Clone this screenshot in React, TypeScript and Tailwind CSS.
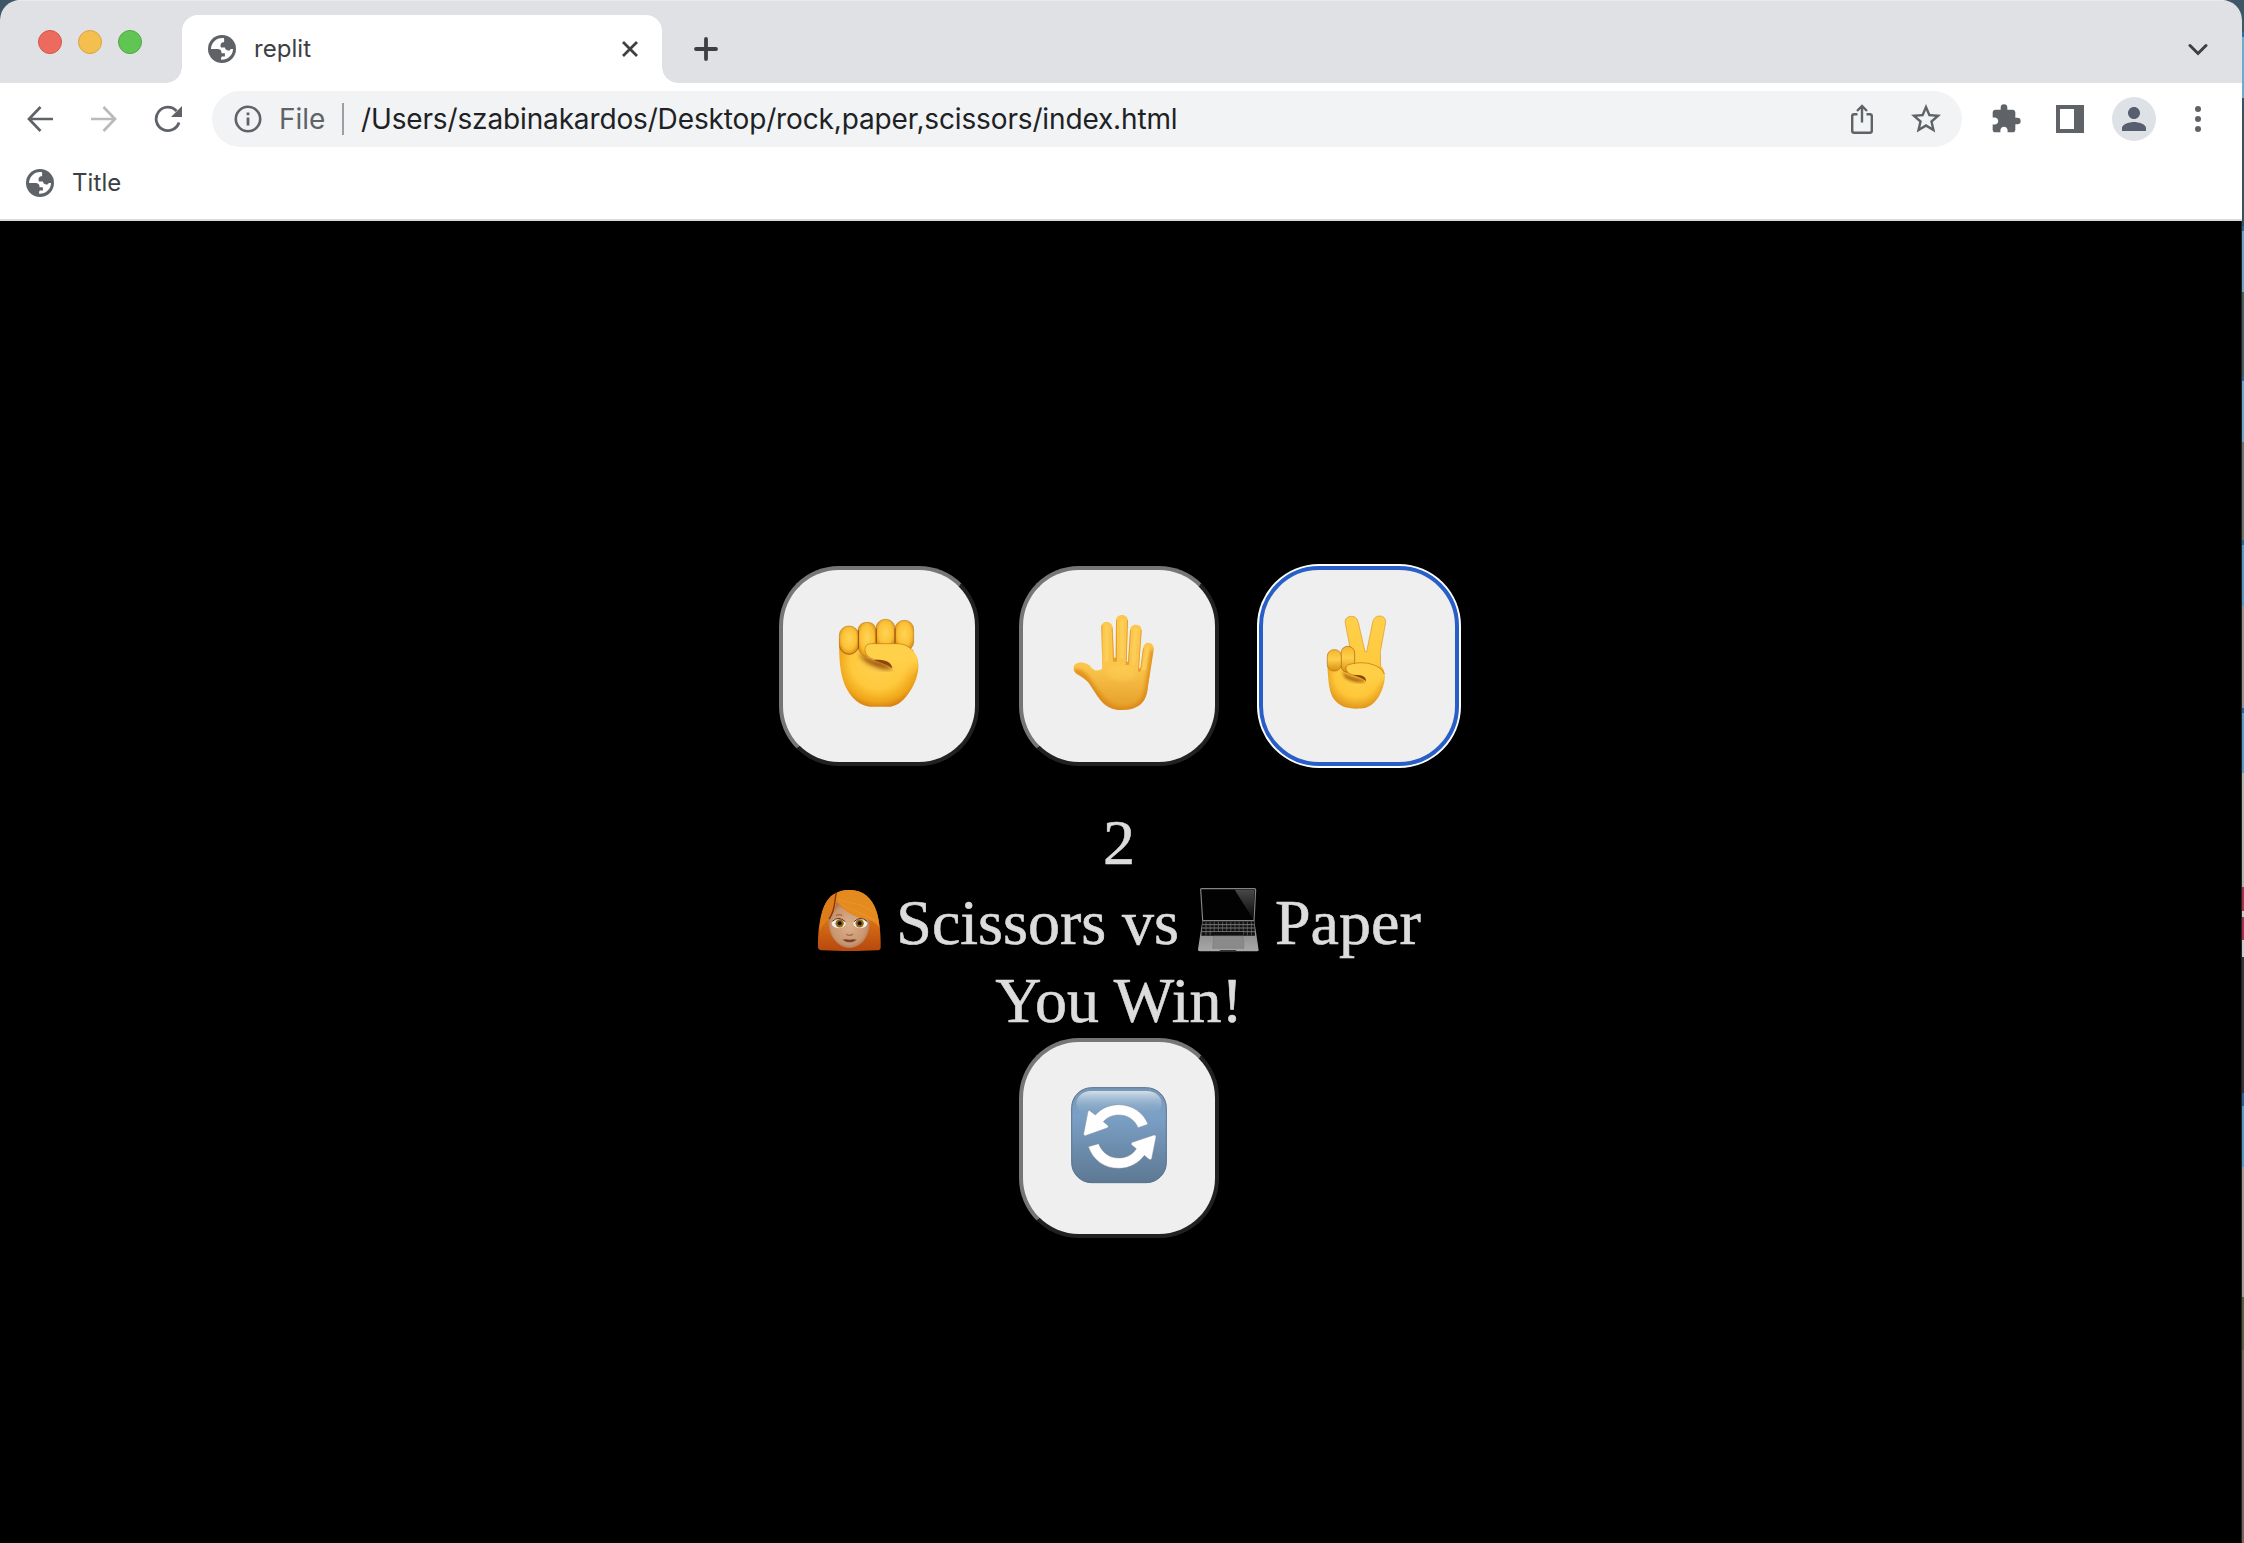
import React from "react";
import { MdExtension, MdPerson, MdStarBorder } from "react-icons/md";

function Globe() {
  return (
    <svg className="size-7 shrink-0" viewBox="0 0 28 28">
      <circle cx="14" cy="14" r="14" fill="#5f6368" />
      <path
        fill="#fff"
        d="M15.6 3.1C9 2.300 3.200 7.300 3 14h6.300c3 0 4.300 1.500 4.300 4.200h3.300v3.300h-2.300c-1 0-1.500.7-1.500 1.700v1.600C19.800 25 25 20 25 14h-2.300c-.5 1.300-1.500 1.700-2.800 1.500-1.900-.2-2.700-1.200-2.900-2.900h-3.900c-.8-.8-.9-3.300.4-4.500.9-.8 1.800-.8 2.600-.8V5.300c0-.9.300-1.600-.5-2.200z"
      />
    </svg>
  );
}

function ArrowIcon({ forward = false }: { forward?: boolean }) {
  return (
    <svg className="size-7" viewBox="0 0 28 28" fill="none" stroke={forward ? "#bababc" : "#5f6368"} strokeWidth="2.700">
      {forward ? <path d="M1 14h24M13.500 2 25 14 13.500 26" /> : <path d="M27 14H3M14.500 2 3 14l11.500 12" />}
    </svg>
  );
}

function ReloadIcon() {
  return (
    <svg className="size-7" viewBox="0 0 28 28">
      <path d="M25 17.500A11.700 11.700 0 1 1 22.500 6" fill="none" stroke="#5f6368" strokeWidth="2.800" />
      <path d="M28 1v11H17z" fill="#5f6368" />
    </svg>
  );
}

function InfoIcon() {
  return (
    <svg className="size-7" viewBox="0 0 28 28">
      <circle cx="14" cy="14" r="12.200" fill="none" stroke="#5f6368" strokeWidth="2.600" />
      <path d="M12.600 7.500h2.800v2.800h-2.800zM12.600 12.500h2.800v8h-2.800z" fill="#5f6368" />
    </svg>
  );
}

function ShareIcon() {
  return (
    <svg className="h-[30px] w-6" viewBox="0 0 24 30" fill="none" stroke="#5f6368" strokeWidth="2.400">
      <path d="M7.500 10.200H4.200a2 2 0 0 0-2 2v14.600a2 2 0 0 0 2 2h15.600a2 2 0 0 0 2-2V12.200a2 2 0 0 0-2-2h-3.300M12 18.500V2.500M7 7l5-5 5 5" />
    </svg>
  );
}

function FistEmoji() {
  return (
    <svg className="-m-1 size-[200px]" viewBox="27 33 600 600" role="img" aria-label="Raised fist">
      <defs>
        <radialGradient id="fistBody" gradientUnits="userSpaceOnUse" cx="325" cy="320" r="150">
          <stop offset="0" stopColor="#ffd052" />
          <stop offset="0.550" stopColor="#fec93c" />
          <stop offset="0.800" stopColor="#f0a51a" />
          <stop offset="1" stopColor="#c56c0f" />
        </radialGradient>
        <radialGradient id="fistFinger" cx="0.500" cy="0.450" r="0.620">
          <stop offset="0" stopColor="#ffd455" />
          <stop offset="0.600" stopColor="#fbc136" />
          <stop offset="1" stopColor="#d2830c" />
        </radialGradient>
        <linearGradient id="fistThumb" gradientUnits="userSpaceOnUse" x1="0" y1="266" x2="0" y2="365">
          <stop offset="0" stopColor="#ffd04a" />
          <stop offset="0.500" stopColor="#ffd04a" />
          <stop offset="1" stopColor="#ffd04a" stopOpacity="0" />
        </linearGradient>
        <filter id="fistSoft"><feGaussianBlur stdDeviation="7" /></filter>
      </defs>
      <path d="M208 250C206 310 210 354 224 389C242 430 270 452 300 455H362C395 449 413 420 426 399C440 375 446 348 445 328C444 306 435 295 420 284L400 250Z" fill="url(#fistBody)" />
      <path d="M267 290C290 318 340 312 368 340C357 348 330 343 303 330C286 322 270 308 267 290Z" fill="#8a3d06" opacity=".8" filter="url(#fistSoft)" />
      <g fill="url(#fistFinger)" stroke="#b36a10" strokeWidth="1.500">
        <rect x="375" y="196" width="56" height="92" rx="27" />
        <path d="M264 228C264 211 276 202 291 202C308 202 318 212 318 229V276C315 292 300 305 288 304C276 303 267 288 264 278Z" />
        <rect x="318" y="193" width="57" height="90" rx="27" />
        <rect x="208" y="213" width="58" height="85" rx="28" />
      </g>
      <path d="M265 225V280M319 220V266M375 220V266" fill="none" stroke="#84420b" strokeWidth="3" opacity=".75" />
      <path d="M210 275C216 300 248 308 266 278" fill="none" stroke="#a4570b" strokeWidth="2.500" opacity=".7" />
      <path d="M285 287C283 272 290 266 304 266H375C402 266 421 276 434 293C444 306 445 320 443 340C430 374 400 390 364 364C376 345 366 324 346 318C322 318 287 315 285 287Z" fill="url(#fistThumb)" />
      <path d="M431 289C411 268 398 266 375 266H304C287 266 283 278 286 291C294 316 326 317 344 318" fill="none" stroke="#bd7411" strokeWidth="2" />
      <path d="M312 315C334 313 366 317 366 340C355 330 337 325 312 315Z" fill="#8d4406" />
    </svg>
  );
}

function HandEmoji() {
  return (
    <svg className="-m-1 size-[200px]" viewBox="27 33 600 600" role="img" aria-label="Raised hand">
      <defs>
        <linearGradient id="handFill" x1="0" y1="0" x2="0" y2="1">
          <stop offset="0" stopColor="#fdc84f" />
          <stop offset="0.550" stopColor="#fbc54b" />
          <stop offset="1" stopColor="#e29a28" />
        </linearGradient>
        <filter id="handSoft"><feGaussianBlur stdDeviation="7" /></filter>
        <clipPath id="handClip">
          <path d="M277 340L274 218C274 207 280 201 290 201C301 201 307 208 308 218L312 308H317L318 198C318 187 325 180 336 180C347 180 354 187 354 198L350 320H354L360 225C361 214 369 209 379 209C391 210 396 217 395 229L387 340H391L399 280C401 268 408 262 418 264C428 265 432 273 431 284L413 400C409 439 390 464 337 465C292 465 276 443 260 420L237 385C226 370 212 366 197 354C187 346 188 325 206 323C226 321 238 329 245 339C255 348 267 350 277 340Z" />
        </clipPath>
      </defs>
      <g clipPath="url(#handClip)">
        <path d="M180 170H440V475H180Z" fill="url(#handFill)" />
        <path d="M190 350C230 350 235 390 268 425C285 450 310 465 337 465C385 465 407 440 413 400L430 285" fill="none" stroke="#d98618" strokeWidth="15" filter="url(#handSoft)" />
        <path d="M274 205V340M308 218L312 320M318 195V320M354 195L350 330M360 225L354 330M395 225L387 350M399 280L389 350" fill="none" stroke="#dc8a18" strokeWidth="6" opacity=".65" />
        <path d="M290 210V320M336 192V310M377 220L370 330M414 275L402 345" fill="none" stroke="#ffd766" strokeWidth="11" opacity=".45" />
        <ellipse cx="335" cy="355" rx="44" ry="24" fill="#ffd35b" opacity=".4" filter="url(#handSoft)" />
      </g>
    </svg>
  );
}

function VictoryEmoji() {
  return (
    <svg className="-m-1 size-[200px]" viewBox="27 33 600 600" role="img" aria-label="Victory hand">
      <defs>
        <linearGradient id="vFingers" x1="0" y1="0" x2="0" y2="1">
          <stop offset="0" stopColor="#ffd04a" />
          <stop offset="1" stopColor="#ffc93c" />
        </linearGradient>
        <radialGradient id="vBody" gradientUnits="userSpaceOnUse" cx="320" cy="360" r="110">
          <stop offset="0" stopColor="#ffd24d" />
          <stop offset="0.600" stopColor="#fec738" />
          <stop offset="1" stopColor="#d98a14" />
        </radialGradient>
        <linearGradient id="vFolded" x1="0" y1="0" x2="0" y2="1">
          <stop offset="0" stopColor="#f5b52e" />
          <stop offset="0.450" stopColor="#ffd04a" />
          <stop offset="1" stopColor="#d78e14" />
        </linearGradient>
        <linearGradient id="vThumb" gradientUnits="userSpaceOnUse" x1="0" y1="324" x2="0" y2="400">
          <stop offset="0" stopColor="#ffcf47" />
          <stop offset="0.500" stopColor="#ffcf47" />
          <stop offset="1" stopColor="#ffcf47" stopOpacity="0" />
        </linearGradient>
        <filter id="vSoft"><feGaussianBlur stdDeviation="5" /></filter>
      </defs>
      <path d="M286 205C283 190 294 184 304 184C317 184 322 191 325 203L345 290H350L368 202C371 188 379 183 390 183C403 184 409 193 406 207L391 290L392 345H313Z" fill="url(#vFingers)" stroke="#d9951f" strokeWidth="2" />
      <path d="M392 333C404 342 406 361 403 379C398 408 385 432 370 445C353 461 337 461 319 461C290 460 270 455 254 435C239 416 235 390 232 330L275 320L313 325Z" fill="url(#vBody)" />
      <path d="M275 345C290 368 325 363 349 379C331 388 300 379 284 368Z" fill="#9d4d06" opacity=".75" filter="url(#vSoft)" />
      <rect x="273" y="274" width="41" height="78" rx="20" fill="url(#vFolded)" stroke="#a9620c" strokeWidth="2" />
      <rect x="232" y="284" width="42" height="64" rx="20" fill="url(#vFolded)" stroke="#b76e0d" strokeWidth="2" />
      <path d="M288 340C287 330 296 329 308 326C325 322 350 322 366 328C387 334 405 350 403 372C390 402 365 404 345 385C355 373 342 363 326 362C306 360 289 355 288 340Z" fill="url(#vThumb)" />
      <path d="M403 357C397 342 384 334 366 328C350 322 325 322 308 326C295 329 287 330 288 342C290 357 308 361 326 362" fill="none" stroke="#b96d0c" strokeWidth="2" />
      <path d="M310 360C329 359 349 361 348 378C338 370 326 366 310 360Z" fill="#8e4304" />
    </svg>
  );
}

function ReloadEmoji() {
  return (
    <svg className="-m-1 size-[200px]" viewBox="27 24 600 600" role="img" aria-label="Play again">
      <defs>
        <linearGradient id="rFill" x1="0" y1="0" x2="0" y2="1">
          <stop offset="0" stopColor="#7796b2" />
          <stop offset="0.300" stopColor="#7ba0c6" />
          <stop offset="1" stopColor="#5d7893" />
        </linearGradient>
        <linearGradient id="rShine" x1="0" y1="0" x2="0" y2="1">
          <stop offset="0" stopColor="#d2dfeb" />
          <stop offset="1" stopColor="#84a7ca" stopOpacity="0" />
        </linearGradient>
      </defs>
      <rect x="185" y="173" width="284" height="285" rx="60" fill="url(#rFill)" stroke="#55728f" strokeWidth="3" />
      <rect x="199" y="183" width="256" height="75" rx="44" fill="url(#rShine)" />
      <g fill="#fff" stroke="#8b8f96" strokeWidth="1.500" strokeLinejoin="round">
        <path d="M234 244Q238 239 243 245L256 255C275 234 299 224 326 224C366 224 401 247 414 283L384 293C374 269 353 255 326 255C308 255 290 263 280 275L293 286Q298 291 291 294L226 317Q220 318 221 311Z" />
        <path d="M235 350L266 341C276 368 299 384 326 384C348 384 367 375 379 356L364 344Q362 339 367 337L432 315Q439 314 438 321L425 386Q421 391 416 387L403 376C385 401 358 415 326 415C284 415 249 391 235 350Z" />
      </g>
    </svg>
  );
}

function WomanEmoji() {
  return (
    <svg className="size-20 shrink-0" viewBox="0 0 240 240" role="img" aria-label="Woman">
      <defs>
        <linearGradient id="hair" x1="0" y1="0" x2="0" y2="1">
          <stop offset="0" stopColor="#e8911e" />
          <stop offset="0.500" stopColor="#d86f14" />
          <stop offset="1" stopColor="#b8480f" />
        </linearGradient>
        <radialGradient id="skin" cx="0.500" cy="0.500" r="0.600">
          <stop offset="0" stopColor="#dcb08c" />
          <stop offset="0.700" stopColor="#c99670" />
          <stop offset="1" stopColor="#9c6040" />
        </radialGradient>
      </defs>
      <path d="M24 203C23 168 27 125 37 93C49 54 78 30 119 30C162 30 186 55 199 92C209 124 213 164 212 203Q211 212 198 211C148 214 90 214 38 211Q25 210 24 203Z" fill="url(#hair)" />
      <path d="M55 117C66 105 74 92 81 67C102 94 138 111 178 121C183 159 161 202 119 204C77 202 53 160 55 117Z" fill="url(#skin)" />
      <path d="M80 38C79 80 123 112 180 121C195 126 207 138 209 146C206 92 184 31 119 30C99 30 87 34 80 38Z" fill="#e48a1e" />
      <path d="M79 38C67 70 78 88 56 119C44 128 34 139 29 157C30 95 48 50 79 38Z" fill="#dc7c1b" />
      <path d="M79 38C72 66 78 88 57 117" fill="none" stroke="#87350e" strokeWidth="4" />
      <path d="M83 55C105 75 140 58 190 98M84 65C112 90 148 92 190 119" fill="none" stroke="#f3a737" strokeWidth="3" opacity=".4" />
      <path d="M78 107Q86 101 97 106" fill="none" stroke="#b06238" strokeWidth="4" />
      <ellipse cx="86" cy="130" rx="21" ry="15" fill="#f6f0e8" />
      <ellipse cx="151" cy="130" rx="21" ry="15" fill="#f6f0e8" />
      <circle cx="89" cy="130" r="12.500" fill="#96681a" /><circle cx="89" cy="130" r="6" fill="#1a1009" />
      <circle cx="149" cy="130" r="12.500" fill="#96681a" /><circle cx="149" cy="130" r="6" fill="#1a1009" />
      <path d="M67 124Q86 106 106 125M132 125Q151 106 171 124" fill="none" stroke="#4e2916" strokeWidth="3" />
      <path d="M109 162Q119 170 129 162" fill="none" stroke="#a56b49" strokeWidth="4" />
      <path d="M97 179Q108 176 119 179Q130 176 140 179Q128 188 119 187Q108 187 97 179Z" fill="#79412f" />
    </svg>
  );
}

function LaptopEmoji() {
  const keys = Array.from({ length: 12 }, (_, i) => i);
  return (
    <svg className="size-20 shrink-0" viewBox="0 0 240 240" role="img" aria-label="Laptop">
      <defs>
        <linearGradient id="glare" x1="0" y1="0" x2="0" y2="1">
          <stop offset="0" stopColor="#484848" />
          <stop offset="1" stopColor="#0a0a0a" />
        </linearGradient>
        <linearGradient id="deck" x1="0" y1="0" x2="0" y2="1">
          <stop offset="0" stopColor="#7c7c7c" />
          <stop offset="1" stopColor="#a8a8a8" />
        </linearGradient>
      </defs>
      <path d="M32 28Q32 26 36 26H193Q197 26 197 29L192 122H38Z" fill="#020202" stroke="#858585" strokeWidth="3.500" />
      <path d="M134 29H194L189 117Z" fill="url(#glare)" />
      <path d="M37 122H193L206 211Q206 214 201 214H29Q23 214 24 208Z" fill="url(#deck)" />
      <path d="M38 124H192L195 167H34Z" fill="#111" />
      <path d="M37 134H193M36 144H194M35 155H195" stroke="#8c8c8c" strokeWidth="2.500" />
      {keys.map((k) => (
        <path key={k} d={`M${48 + k * 12.4} 125V166`} stroke="#7c7c7c" strokeWidth="1.800" />
      ))}
      <path d="M68 156h91v10h-91z" fill="#111" />
      <path d="M71 168H159L162 205H68Z" fill="#8a8a8a" stroke="#757575" strokeWidth="1.500" />
      <path d="M88 210H140L136 214H92Z" fill="#333" />
    </svg>
  );
}

function GameButton({ children, active = false }: { children: React.ReactNode; active?: boolean }) {
  return (
    <button
      className={
        active
          ? "size-[200px] rounded-[60px] border-4 border-[#285fc7] bg-[#efefef] shadow-[0_0_0_2px_#fff]"
          : "size-[200px] rounded-[60px] border-4 border-t-[#767676] border-r-[#212121] border-b-[#212121] border-l-[#767676] bg-[#efefef]"
      }
    >
      {children}
    </button>
  );
}

/* Heights and colours of the desktop slices visible beside the window. */
const desktopSlices: [number, string][] = [
  [32, "#3e5768"], [5, "#2a6fa8"], [61, "#6fa9cc"], [128, "#38525f"], [5, "#2e68a0"],
  [61, "#6ea3c4"], [84, "#4a5e60"], [5, "#2f68a0"], [61, "#6fa5c4"], [98, "#70736f"],
  [5, "#2b68a5"], [61, "#5a9ac0"], [102, "#9c948e"], [5, "#2b68a5"], [60, "#5f9ec4"],
  [114, "#b8b4b0"], [24, "#a83248"], [6, "#cccccc"], [23, "#a83248"], [17, "#cccccc"],
  [136, "#353535"], [13, "#2b5f9a"], [61, "#5a9bc4"], [130, "#a59c96"], [53, "#5a6040"],
  [193, "#75685e"],
];

export default function App() {
  return (
    <div className="flex h-[1543px] w-[2244px] overflow-hidden bg-[#3e5768] font-['Inter',sans-serif]">
      <div className="flex w-[2242px] flex-col overflow-hidden rounded-t-[20px] bg-black">
        <header className="flex h-[83px] shrink-0 border-t border-[#e9eaec] bg-[#dfe1e5]">
          <div className="flex w-[182px] gap-4 pt-[29px] pl-[38px]">
            <span className="size-6 rounded-full border border-[#d65548] bg-[#ed6a5e]" />
            <span className="size-6 rounded-full border border-[#d9a340] bg-[#f5bf4f]" />
            <span className="size-6 rounded-full border border-[#50a73e] bg-[#61c554]" />
          </div>
          <div className="relative mt-[14px] flex h-[68px] w-[480px] items-center rounded-t-[16px] bg-white pl-[26px]">
            <span className="absolute bottom-0 -left-4 size-4 bg-[radial-gradient(circle_at_0_0,transparent_15.5px,white_16px)]" />
            <span className="absolute -right-4 bottom-0 size-4 bg-[radial-gradient(circle_at_100%_0,transparent_15.5px,white_16px)]" />
            <Globe />
            <span className="ml-[18px] text-2xl leading-7 tracking-[0.050px] text-[#3c4043]">replit</span>
            <svg className="mr-6 ml-auto size-4" viewBox="0 0 16 16" stroke="#3c4043" strokeWidth="2.800">
              <path d="m1 1 14 14M15 1 1 15" />
            </svg>
          </div>
          <svg className="mt-9 ml-8 size-6" viewBox="0 0 24 24" stroke="#3c4043" strokeWidth="3.800" strokeLinecap="round">
            <path d="M12 2v20M2 12h20" />
          </svg>
          <svg className="mt-[42px] mr-[34px] ml-auto h-[14px] w-5" viewBox="0 0 20 14" fill="none" stroke="#3c4043" strokeWidth="3" strokeLinecap="round">
            <path d="m2 2.500 8 8 8-8" />
          </svg>
        </header>

        <div className="flex h-[72px] shrink-0 items-center bg-white pl-[26px]">
          <div className="flex w-[186px] gap-9">
            <ArrowIcon />
            <ArrowIcon forward />
            <ReloadIcon />
          </div>
          <div className="flex h-14 w-[1750px] items-center rounded-full bg-[#f1f3f4] pl-[22px] text-[28px] leading-8">
            <InfoIcon />
            <span className="ml-[17px] w-[63px] text-[#5f6368]">File</span>
            <span className="h-8 w-0.5 bg-[#9aa0a6]" />
            <span className="ml-[17px] tracking-[-0.140px] whitespace-nowrap text-[#202124]">
              /Users/szabinakardos/Desktop/rock,paper,scissors/index.html
            </span>
            <span className="mr-[18px] ml-auto flex items-center gap-[34px]">
              <ShareIcon />
              <MdStarBorder className="size-9 text-[#5f6368]" />
            </span>
          </div>
          <div className="flex items-center pl-[28px]">
            <MdExtension className="size-8 text-[#5f6368]" />
            <span className="ml-[34px] h-7 w-7 border-y-4 border-r-[10px] border-l-4 border-[#5f6368]" />
            <span className="ml-7 flex size-11 items-center justify-center rounded-full bg-[#dee1e6] text-[#565e70]">
              <MdPerson className="size-9" />
            </span>
            <span className="ml-[39px] flex flex-col gap-1">
              <span className="size-1.5 rounded-full bg-[#5f6368]" />
              <span className="size-1.5 rounded-full bg-[#5f6368]" />
              <span className="size-1.5 rounded-full bg-[#5f6368]" />
            </span>
          </div>
        </div>

        <div className="flex h-[66px] shrink-0 items-center border-b-2 border-[#d9dddd] bg-white pb-2 pl-[26px]">
          <Globe />
          <span className="ml-[18px] text-2xl leading-7 tracking-[0.100px] text-[#3c4043]">Title</span>
        </div>

        <main className="flex flex-1 flex-col items-center border-r border-[#222] pt-[345px] pr-[3px] font-['Liberation_Serif',serif] text-[64px] text-[#dcdcdc] [-webkit-text-stroke:0.6px_#dcdcdc]">
          <div className="flex gap-10">
            <GameButton><FistEmoji /></GameButton>
            <GameButton><HandEmoji /></GameButton>
            <GameButton active><VictoryEmoji /></GameButton>
          </div>
          <div className="mt-10 h-[76px] leading-[74px]">2</div>
          <div className="flex h-[82px] pr-[7px] leading-[82px] whitespace-nowrap">
            <span className="-mt-0.5"><WomanEmoji /></span>
            <span className="ml-1.5">Scissors vs</span>
            <span className="-mt-0.5 ml-[11px]"><LaptopEmoji /></span>
            <span className="ml-[5px]">Paper</span>
          </div>
          <div className="leading-[74px]">You Win!</div>
          <GameButton><ReloadEmoji /></GameButton>
        </main>
      </div>
      <aside className="w-0.5">
        {desktopSlices.map(([height, color], i) => (
          <div key={i} style={{ height, backgroundColor: color }} />
        ))}
      </aside>
    </div>
  );
}
